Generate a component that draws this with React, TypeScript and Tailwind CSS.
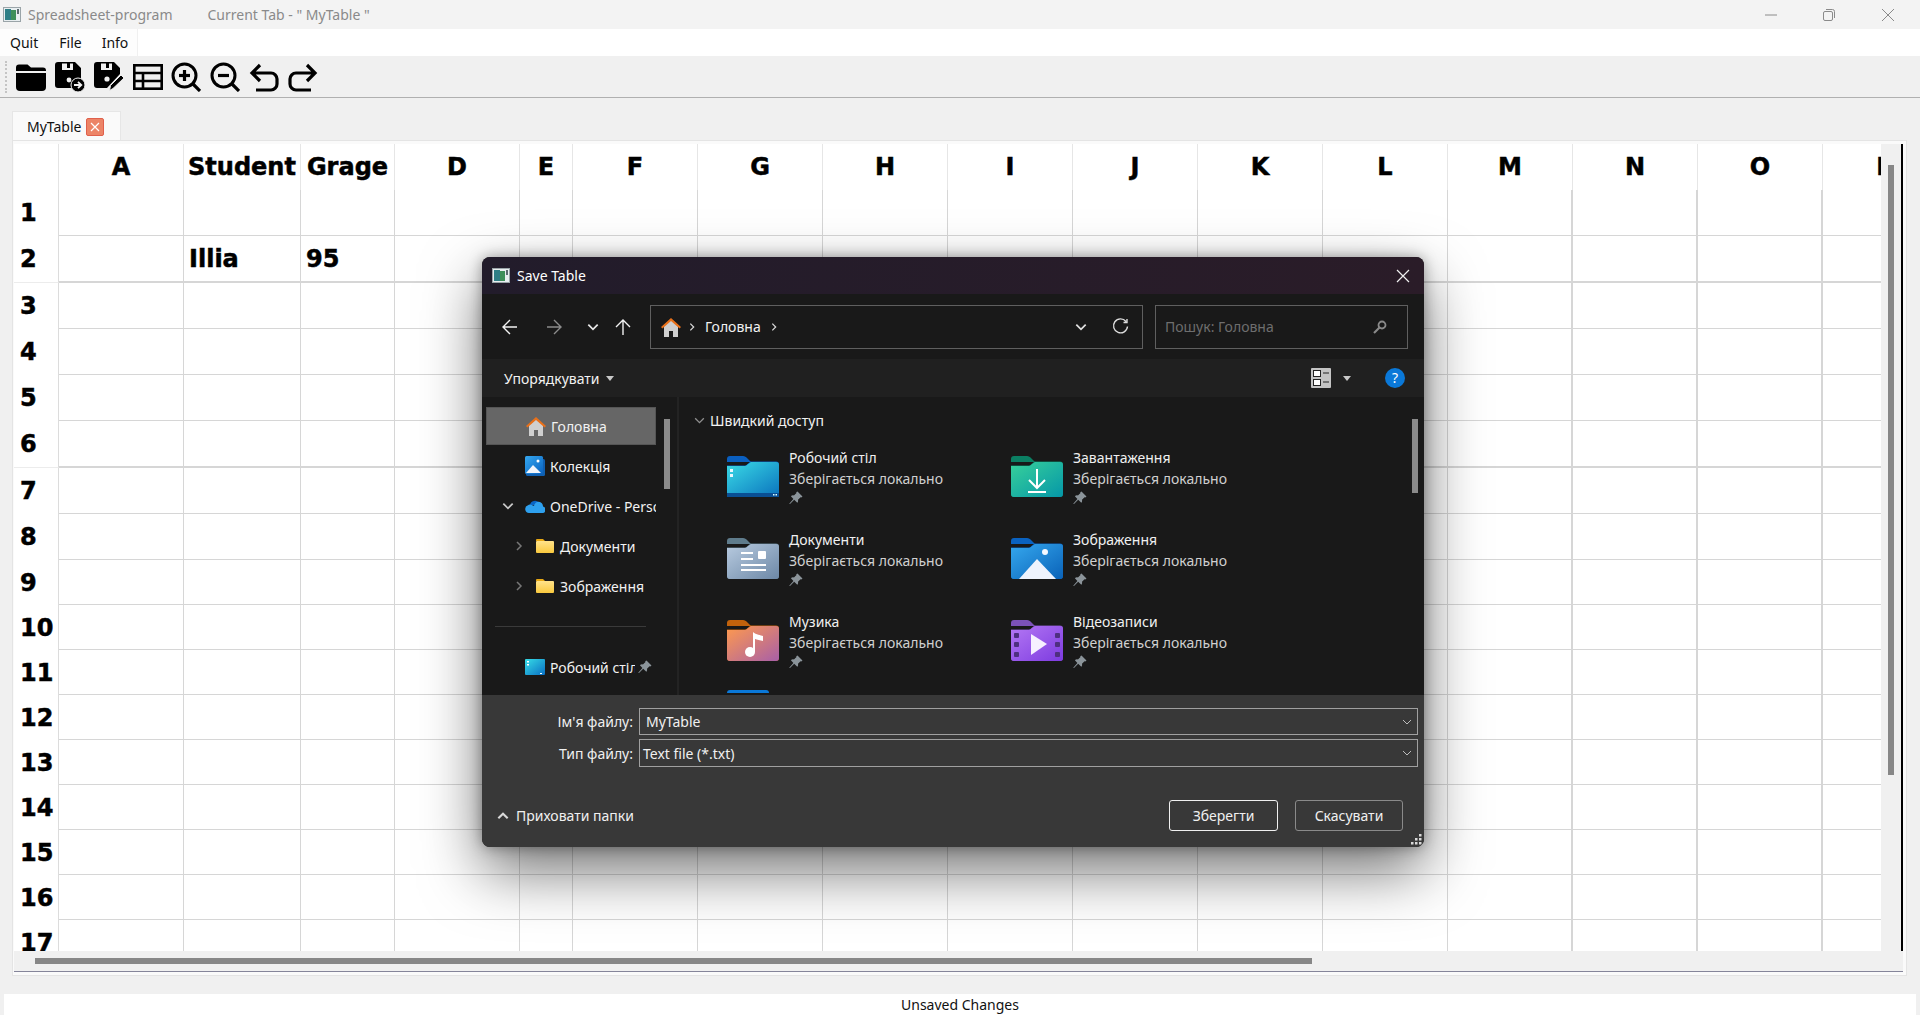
import React from "react";

const UI = "font-['Noto_Sans',sans-serif]";

const cols = [
  { label: "A", w: "w-[125px]", line: "border-r" },
  { label: "Student", w: "w-[117px]", line: "border-r" },
  { label: "Grage", w: "w-[94px]", line: "border-r" },
  { label: "D", w: "w-[125px]", line: "border-r" },
  { label: "E", w: "w-[53px]", line: "border-r" },
  { label: "F", w: "w-[125px]", line: "border-r" },
  { label: "G", w: "w-[125px]", line: "border-r" },
  { label: "H", w: "w-[125px]", line: "border-r" },
  { label: "I", w: "w-[125px]", line: "border-r" },
  { label: "J", w: "w-[125px]", line: "border-r" },
  { label: "K", w: "w-[125px]", line: "border-r" },
  { label: "L", w: "w-[125px]", line: "border-r" },
  { label: "M", w: "w-[125px]", line: "border-r-2" },
  { label: "N", w: "w-[125px]", line: "border-r-2" },
  { label: "O", w: "w-[125px]", line: "border-r-2" },
  { label: "P", w: "w-[125px]", line: "border-r-2" },
];

const rows = [
  { n: 1, h: "h-[46px]", b: "border-b" },
  { n: 2, h: "h-[47px]", b: "border-b-2", cells: { 1: "Illia", 2: "95" }, strong: true },
  { n: 3, h: "h-[46px]", b: "border-b" },
  { n: 4, h: "h-[46px]", b: "border-b" },
  { n: 5, h: "h-[46px]", b: "border-b" },
  { n: 6, h: "h-[47px]", b: "border-b-2", strong: true },
  { n: 7, h: "h-[46px]", b: "border-b" },
  { n: 8, h: "h-[46px]", b: "border-b" },
  { n: 9, h: "h-[45px]", b: "border-b" },
  { n: 10, h: "h-[45px]", b: "border-b" },
  { n: 11, h: "h-[45px]", b: "border-b" },
  { n: 12, h: "h-[45px]", b: "border-b" },
  { n: 13, h: "h-[45px]", b: "border-b" },
  { n: 14, h: "h-[45px]", b: "border-b" },
  { n: 15, h: "h-[45px]", b: "border-b" },
  { n: 16, h: "h-[45px]", b: "border-b" },
  { n: 17, h: "h-[45px]", b: "border-b" },
] as { n: number; h: string; b: string; cells?: Record<number, string>; strong?: boolean }[];

const heavy =
  "font-['DejaVu_Sans',sans-serif] font-bold text-[24px] leading-none text-black [-webkit-text-stroke:0.5px_black]";

function AppIcon() {
  return (
    <svg width="18" height="15" viewBox="0 0 18 15" className="shrink-0">
      <rect x="0.5" y="0.5" width="17" height="14" fill="#e8eef0" stroke="#9aa4a8" />
      <rect x="2" y="2" width="6" height="11" fill="#2f7f86" />
      <rect x="8" y="3" width="5" height="10" fill="#3e8f5a" />
      <rect x="14" y="2" width="2" height="5" fill="#5c6a70" />
    </svg>
  );
}

const T = { width: 30, height: 30, viewBox: "0 0 30 30", className: "shrink-0" };

function FolderOpenTool() {
  return (
    <svg {...T}>
      <path d="M0 5.5a3 3 0 0 1 3-3h8.5l3.5 3h12a3 3 0 0 1 3 3V9H0z" fill="#000" />
      <path d="M0 11h30v14a4 4 0 0 1-4 4H4a4 4 0 0 1-4-4z" fill="#000" />
    </svg>
  );
}
function SaveAsTool() {
  return (
    <svg {...T}>
      <path fillRule="evenodd" d="M0 3a3 3 0 0 1 3-3h17l6 6v11h-9v9H3a3 3 0 0 1-3-3zM7 1.5v6.5h11V1.5h-3V6h-3V1.5z" fill="#000" />
      <circle cx="14" cy="18" r="3.2" fill="none" stroke="#000" strokeWidth="2.2" />
      <circle cx="14" cy="18" r="5.6" fill="#000" />
      <circle cx="14" cy="18" r="2.4" fill="#f0f0f0" />
      <circle cx="23" cy="23" r="7" fill="#000" stroke="#f0f0f0" strokeWidth="1" />
      <path d="M19 23h7M23 19.8l3.3 3.2-3.3 3.2" fill="none" stroke="#f0f0f0" strokeWidth="1.8" />
    </svg>
  );
}
function SaveEditTool() {
  return (
    <svg {...T}>
      <path fillRule="evenodd" d="M0 3a3 3 0 0 1 3-3h17l6 6v6l-13 14H3a3 3 0 0 1-3-3zM7 1.5v6.5h11V1.5h-3V6h-3V1.5z" fill="#000" />
      <circle cx="13" cy="17" r="2.6" fill="#f0f0f0" />
      <path d="M15.5 28.5l1-5L27 13l3 3-11 10.5z" fill="#000" stroke="#f0f0f0" strokeWidth="1" />
    </svg>
  );
}
function TableTool() {
  return (
    <svg {...T} fill="none" stroke="#000" strokeWidth="2.6">
      <rect x="1.3" y="3.3" width="27.4" height="23.4" />
      <path d="M1 11h28M1 19h28M10 11v16" />
    </svg>
  );
}
function ZoomTool({ plus }: { plus?: boolean }) {
  return (
    <svg {...T} fill="none" stroke="#000" strokeWidth="3">
      <circle cx="13.5" cy="13.5" r="11.5" />
      <path d="M22 22l7 7" strokeWidth="3.2" />
      <path d="M8 13.5h11" strokeWidth="3.2" />
      {plus && <path d="M13.5 8v11" strokeWidth="3.2" />}
    </svg>
  );
}
function UndoTool({ flip }: { flip?: boolean }) {
  return (
    <svg {...T} fill="none" stroke="#000" strokeWidth="3.2" className={flip ? "shrink-0 -scale-x-100" : "shrink-0"}>
      <path d="M11 3L3 11l8 8M3 11h19a6 6 0 0 1 6 6v5a6 6 0 0 1-6 6H7" />
    </svg>
  );
}

function HomeIcon() {
  return (
    <svg width="20" height="20" viewBox="0 0 20 20" className="shrink-0">
      <path d="M3 9l7-6 7 6v11h-5v-6H8v6H3z" fill="#cfcfcf" />
      <path d="M0 10l10-9 10 9-1.4 1.4L10 4 1.4 11.4z" fill="#e8701a" />
    </svg>
  );
}
function CollectionIcon() {
  return (
    <svg width="20" height="20" viewBox="0 0 20 20" className="shrink-0">
      <defs>
        <linearGradient id="cg" x1="0" y1="0" x2="1" y2="1">
          <stop offset="0" stopColor="#35a8f0" />
          <stop offset="1" stopColor="#0a62c0" />
        </linearGradient>
      </defs>
      <rect x="1" y="3" width="19" height="17" rx="1.5" fill="#0f5fb0" />
      <rect x="0" y="0" width="18" height="18" rx="1.5" fill="url(#cg)" />
      <path d="M1 17l7-8 8 8z" fill="#f2f5fb" />
      <circle cx="13" cy="5" r="1.5" fill="#fff" />
    </svg>
  );
}
function CloudIcon() {
  return (
    <svg width="20" height="14" viewBox="0 0 20 14" className="shrink-0">
      <path d="M5 6a5 5 0 0 1 9-2 4 4 0 0 1 2 3z" fill="#0a64c4" />
      <path d="M4 14a4 4 0 0 1-1-7.8C5 4 8 7 9 7a4 4 0 0 1 9 .5A3.3 3.3 0 0 1 17 14z" fill="#2ea0ee" />
    </svg>
  );
}
function SmallFolder() {
  return (
    <svg width="18" height="14" viewBox="0 0 18 14" className="shrink-0">
      <defs>
        <linearGradient id="sf" x1="0" y1="0" x2="0" y2="1">
          <stop offset="0" stopColor="#ffe38a" />
          <stop offset="1" stopColor="#f9c93e" />
        </linearGradient>
      </defs>
      <path d="M0 1a1 1 0 0 1 1-1h6l2 2H0z" fill="#e8a814" />
      <rect x="0" y="2" width="18" height="12" rx="1" fill="url(#sf)" />
    </svg>
  );
}
function DesktopSmall() {
  return (
    <svg width="20" height="16" viewBox="0 0 20 16" className="shrink-0">
      <defs>
        <linearGradient id="ds" x1="0" y1="0" x2="1" y2="1">
          <stop offset="0" stopColor="#36dce6" />
          <stop offset="1" stopColor="#0a70c4" />
        </linearGradient>
      </defs>
      <rect width="20" height="16" rx="1" fill="url(#ds)" />
      <rect x="2" y="2" width="2" height="1.5" fill="#fff" />
      <rect x="2" y="5" width="2" height="1.5" fill="#fff" />
      <rect x="15" y="14" width="2" height="1" fill="#fff" />
    </svg>
  );
}
function Pin({ className = "" }: { className?: string }) {
  return (
    <svg width="14" height="14" viewBox="0 0 14 14" className={`shrink-0 ${className}`}>
      <path d="M8.5 0.5l5 5-1.2 1-0.8-.3-2.5 2.6c.3 1.2 0 2.3-.7 3L5.2 8.8 1 13l-.8-.3L4.400 8 1.900 5.200c.8-.8 1.900-1 3-.7l2.600-2.500-.3-.8z" fill="#8b949a" />
    </svg>
  );
}
function Chevron({ dir = "down", size = 12, color = "#d8d8d8", width = 1.5 }: { dir?: "down" | "up" | "right"; size?: number; color?: string; width?: number }) {
  const d = dir === "down" ? "M2 4l4 4 4-4" : dir === "up" ? "M2 8l4-4 4 4" : "M4 2l4 4-4 4";
  return (
    <svg width={size} height={size} viewBox="0 0 12 12" fill="none" stroke={color} strokeWidth={width} className="shrink-0">
      <path d={d} />
    </svg>
  );
}
function Caret() {
  return (
    <svg width="8" height="5" viewBox="0 0 8 5" className="shrink-0">
      <path d="M0 0h8L4 5z" fill="#c8c8c8" />
    </svg>
  );
}

function BigFolder({ id, tab, from, to, children }: { id: string; tab: string; from: string; to: string; children?: React.ReactNode }) {
  return (
    <svg width="52" height="41" viewBox="0 0 52 41" className="shrink-0">
      <defs>
        <linearGradient id={id} x1="0" y1="0" x2="1" y2="1">
          <stop offset="0" stopColor={from} />
          <stop offset="1" stopColor={to} />
        </linearGradient>
      </defs>
      <path d="M0 3a3 3 0 0 1 3-3h13c2 0 3 1 4 2l4 4H0z" fill={tab} />
      <path d="M0 9.500h17c1.500 0 2.500-.5 3.500-1.500l3-2.500H49a3 3 0 0 1 3 3V38a3 3 0 0 1-3 3H3a3 3 0 0 1-3-3z" fill={tab} />
      <path d="M0 10h17c1.500 0 2.500-.5 3.500-1.500L24 6h25a3 3 0 0 1 3 3v29a3 3 0 0 1-3 3H3a3 3 0 0 1-3-3z" fill={`url(#${id})`} />
      {children}
    </svg>
  );
}

const tiles = [
  {
    name: "Робочий стіл",
    icon: (
      <BigFolder id="f1" tab="#0a5fc0" from="#3adbe6" to="#0a72bd">
        <rect x="3" y="13" width="3" height="3" fill="#e8f8ff" />
        <rect x="3" y="18" width="3" height="3" fill="#e8f8ff" />
        <rect x="0" y="37" width="52" height="4" fill="#0a4f94" />
        <rect x="46" y="38" width="1.500" height="1.500" fill="#dff" />
        <rect x="48.500" y="38" width="1.500" height="1.500" fill="#dff" />
      </BigFolder>
    ),
  },
  {
    name: "Завантаження",
    icon: (
      <BigFolder id="f2" tab="#0b7f63" from="#38d19a" to="#0597a8">
        <path d="M26 13v18M18 24l8 8 8-8" fill="none" stroke="#fff" strokeWidth="2" />
        <rect x="17" y="35" width="18" height="2" fill="#fff" />
      </BigFolder>
    ),
  },
  {
    name: "Документи",
    icon: (
      <BigFolder id="f3" tab="#5f7c8c" from="#b8cbe0" to="#6d88a6">
        <rect x="14" y="14" width="12" height="2" fill="#fff" />
        <rect x="14" y="20" width="12" height="2" fill="#fff" />
        <rect x="31" y="13" width="8" height="8" rx="1" fill="#fff" />
        <rect x="14" y="26" width="25" height="2" fill="#fff" />
        <rect x="14" y="31" width="25" height="2" fill="#fff" />
      </BigFolder>
    ),
  },
  {
    name: "Зображення",
    icon: (
      <BigFolder id="f4" tab="#0a62c0" from="#35a8ee" to="#0a62b8">
        <circle cx="34" cy="14" r="3" fill="#f4f8ff" />
        <path d="M8 41l18-20 19 20z" fill="#eef3fd" />
      </BigFolder>
    ),
  },
  {
    name: "Музика",
    icon: (
      <BigFolder id="f5" tab="#c2620c" from="#ff9a4d" to="#a85fa8">
        <circle cx="23" cy="32" r="5" fill="#fff" />
        <path d="M26 32V12c3 3 8 3 10 4v5c-3-1-6-1-8-2v13z" fill="#fff" />
      </BigFolder>
    ),
  },
  {
    name: "Відеозаписи",
    icon: (
      <BigFolder id="f6" tab="#7c52b8" from="#b478f4" to="#7d3be0">
        <path d="M20 14l16 10-16 11z" fill="#f6f0ff" />
        {[13, 22, 32].map((y) => (
          <React.Fragment key={y}>
            <rect x="3" y={y} width="5" height="5" rx="1" fill="#4e2f80" />
            <rect x="44" y={y} width="5" height="5" rx="1" fill="#4e2f80" />
          </React.Fragment>
        ))}
      </BigFolder>
    ),
  },
];

function SideRow({ pl, children, active }: { pl: string; children: React.ReactNode; active?: boolean }) {
  return (
    <div className={`flex h-[38px] w-[170px] shrink-0 items-center overflow-hidden whitespace-nowrap text-[14px] text-[#f2f2f2] ${pl} ${active ? "border border-[#555] bg-[#666666]" : ""}`}>
      {children}
    </div>
  );
}

function Dialog() {
  return (
    <div className={`${UI} absolute left-[482px] top-[257px] flex h-[590px] w-[942px] flex-col overflow-hidden rounded-lg bg-[#191919] shadow-[0_24px_60px_rgba(0,0,0,0.55),0_0_14px_rgba(0,0,0,0.35)]`}>
      <div className="flex h-[37px] shrink-0 items-center bg-gradient-to-r from-[#221c2b] to-[#2a1c28] pl-[10px] pr-[14px]">
        <AppIcon />
        <span className="ml-[7px] text-[14px] text-white">Save Table</span>
        <svg width="14" height="14" viewBox="0 0 14 14" className="ml-auto" stroke="#f0f0f0" strokeWidth="1.2">
          <path d="M1 1l12 12M13 1L1 13" />
        </svg>
      </div>

      <div className="flex h-[65px] shrink-0 items-center bg-[#191919] pl-[20px]">
        <svg width="16" height="16" viewBox="0 0 16 16" fill="none" stroke="#f2f2f2" strokeWidth="1.400">
          <path d="M15 8H1M8 1L1 8l7 7" />
        </svg>
        <svg width="16" height="16" viewBox="0 0 16 16" fill="none" stroke="#8c8c8c" strokeWidth="1.400" className="ml-[28px]">
          <path d="M1 8h14M8 1l7 7-7 7" />
        </svg>
        <div className="ml-[24px]"><Chevron size={14} color="#e8e8e8" /></div>
        <svg width="16" height="16" viewBox="0 0 16 16" fill="none" stroke="#f2f2f2" strokeWidth="1.400" className="ml-[15px]">
          <path d="M8 16V1M1 8l7-7 7 7" />
        </svg>
        <div className="ml-[19px] flex h-[44px] w-[493px] items-center border border-[#5f5f5f] pl-[10px] pr-[13px] text-[14px] text-[#f2f2f2]">
          <HomeIcon />
          <div className="ml-[6px]"><Chevron dir="right" size={10} /></div>
          <span className="ml-[8px]">Головна</span>
          <div className="ml-[8px]"><Chevron dir="right" size={10} /></div>
          <div className="ml-auto"><Chevron size={14} color="#e0e0e0" /></div>
          <svg width="17" height="17" viewBox="0 0 17 17" fill="none" stroke="#dcdcdc" strokeWidth="1.400" className="ml-[24px]">
            <path d="M14 3.500A7 7 0 1 0 15.500 8.500M15 1v3.500h-3.500" />
          </svg>
        </div>
        <div className="ml-[12px] flex h-[44px] w-[253px] items-center border border-[#5f5f5f] pl-[9px] pr-[20px] text-[14px] text-[#6e6e6e]">
          <span>Пошук: Головна</span>
          <svg width="14" height="14" viewBox="0 0 14 14" fill="none" stroke="#8a8a8a" strokeWidth="1.800" className="ml-auto">
            <circle cx="9" cy="5" r="3.500" />
            <path d="M6.500 7.500L1 13" strokeWidth="2.200" />
          </svg>
        </div>
      </div>

      <div className="flex h-[38px] shrink-0 items-center bg-[#202020] pl-[22px] pr-[19px] text-[14px] text-[#f2f2f2]">
        <span>Упорядкувати</span>
        <div className="ml-[6px]"><Caret /></div>
        <svg width="20" height="20" viewBox="0 0 20 20" className="ml-auto">
          <rect width="20" height="20" rx="1" fill="#c4c4c4" />
          <rect x="2.500" y="2.500" width="7" height="6" fill="#fff" stroke="#222" />
          <rect x="2.500" y="11.500" width="7" height="6" fill="#fff" stroke="#222" />
          <path d="M12 5h6M12 14h6" stroke="#222" />
        </svg>
        <div className="ml-[12px]"><Caret /></div>
        <div className="ml-[34px] flex h-[20px] w-[20px] items-center justify-center rounded-full bg-[#0a78d8] text-[14px] leading-none text-white">?</div>
      </div>

      <div className="flex min-h-0 flex-1 overflow-hidden">
        <div className="flex w-[197px] shrink-0 border-r-2 border-[#232323] pl-[4px]">
          <div className="flex w-[170px] flex-col gap-[2px] pt-[10px]">
            <SideRow pl="pl-[39px]" active>
              <HomeIcon />
              <span className="ml-[5px]">Головна</span>
            </SideRow>
            <SideRow pl="pl-[39px]">
              <CollectionIcon />
              <span className="ml-[5px]">Колекція</span>
            </SideRow>
            <SideRow pl="pl-[15px]">
              <Chevron size={14} color="#c8c8c8" />
              <div className="ml-[10px]"><CloudIcon /></div>
              <span className="ml-[5px]">OneDrive - Personal</span>
            </SideRow>
            <SideRow pl="pl-[27px]">
              <Chevron dir="right" size={12} color="#777" />
              <div className="ml-[11px]"><SmallFolder /></div>
              <span className="ml-[6px]">Документи</span>
            </SideRow>
            <SideRow pl="pl-[27px]">
              <Chevron dir="right" size={12} color="#777" />
              <div className="ml-[11px]"><SmallFolder /></div>
              <span className="ml-[6px]">Зображення</span>
            </SideRow>
            <div className="ml-[9px] mt-[19px] mb-[19px] h-px w-[151px] shrink-0 bg-[#3a3a3a]" />
            <SideRow pl="pl-[39px]">
              <DesktopSmall />
              <span className="ml-[5px] w-[85px] overflow-hidden">Робочий стіл</span>
              <Pin className="ml-[3px]" />
            </SideRow>
          </div>
          <div className="ml-[8px] mt-[22px] h-[70px] w-[6px] bg-[#8a8a8a]" />
        </div>

        <div className="flex min-w-0 flex-1">
          <div className="min-w-0 flex-1 pl-[14px]">
            <div className="flex h-[46px] items-center text-[14px] text-[#f2f2f2]">
              <Chevron size={13} color="#8e8e8e" width={1.200} />
              <span className="ml-[4px]">Швидкий доступ</span>
            </div>
            <div className="ml-[34px] grid w-[570px] grid-cols-[284px_284px]">
              {tiles.map((t) => (
                <div key={t.name} className="flex h-[82px] gap-[10px] pt-[4px]">
                  <div className="pt-[9px]">{t.icon}</div>
                  <div className="text-[14px] leading-[21px] text-[#f0f0f0]">
                    <div>{t.name}</div>
                    <div className="text-[#d0d0d0]">Зберігається локально</div>
                    <Pin className="mt-[2px]" />
                  </div>
                </div>
              ))}
              <div className="h-[3px] w-[42px] rounded-t-sm bg-[#0a78d8] mt-[1px]" />
            </div>
          </div>
          <div className="mr-[6px] mt-[22px] h-[74px] w-[6px] bg-[#8a8a8a]" />
        </div>
      </div>

      <div className="flex h-[152px] shrink-0 flex-col bg-[#383838] pr-[6px] text-[14px] text-[#f0f0f0]">
        <div className="mt-[13px] flex items-center">
          <span className="w-[151px] text-right">Ім'я файлу:</span>
          <div className="ml-[6px] flex h-[27px] flex-1 items-center justify-between border border-[#a0a0a0] pl-[6px] pr-[4px]">
            <span>MyTable</span>
            <Chevron size={12} color="#bdbdbd" width={1} />
          </div>
        </div>
        <div className="mt-[4px] flex items-center">
          <span className="w-[151px] text-right">Тип файлу:</span>
          <div className="ml-[6px] flex h-[28px] flex-1 items-center justify-between border border-[#a0a0a0] pl-[3px] pr-[4px]">
            <span>Text file (*.txt)</span>
            <Chevron size={12} color="#bdbdbd" width={1} />
          </div>
        </div>
        <div className="mt-auto mb-[16px] flex items-center pl-[14px] pr-[15px]">
          <Chevron dir="up" size={14} color="#d8d8d8" width={1.800} />
          <span className="ml-[6px]">Приховати папки</span>
          <div className="ml-auto flex h-[31px] w-[109px] items-center justify-center rounded-[3px] border border-[#f0f0f0]">Зберегти</div>
          <div className="ml-[17px] flex h-[31px] w-[108px] items-center justify-center rounded-[3px] border border-[#8a8a8a]">Скасувати</div>
        </div>
      </div>
      <svg width="11" height="11" viewBox="0 0 11 11" fill="#d8d8d8" className="absolute bottom-[2px] right-[2px]">
        <rect x="8" y="0" width="2.500" height="2.500" />
        <rect x="4" y="4" width="2.500" height="2.500" />
        <rect x="8" y="4" width="2.500" height="2.500" />
        <rect x="0" y="8" width="2.500" height="2.500" />
        <rect x="4" y="8" width="2.500" height="2.500" />
        <rect x="8" y="8" width="2.500" height="2.500" />
      </svg>
    </div>
  );
}

export default function App() {
  return (
    <div className={`${UI} relative flex h-[1015px] w-[1920px] flex-col overflow-hidden bg-[#f0f0f0]`}>
      {/* window title */}
      <div className="flex h-[29px] shrink-0 items-center bg-[#f3f3f3] pl-[3px] text-[14px] text-[#8a8a8a]">
        <AppIcon />
        <span className="ml-[7px]">Spreadsheet-program</span>
        <span className="ml-[35px]">Current Tab - " MyTable "</span>
        <div className="ml-auto flex items-center pr-[26px]">
          <svg width="12" height="12" viewBox="0 0 12 12" stroke="#8a8a8a"><path d="M0 6h12" /></svg>
          <svg width="12" height="12" viewBox="0 0 12 12" fill="none" stroke="#8a8a8a" className="ml-[46px]">
            <rect x="0.500" y="2.500" width="9" height="9" rx="1.500" />
            <path d="M3 .5h6.500a2 2 0 0 1 2 2V9" />
          </svg>
          <svg width="12" height="12" viewBox="0 0 12 12" stroke="#8a8a8a" className="ml-[47px]"><path d="M0 0l12 12M12 0L0 12" /></svg>
        </div>
      </div>

      {/* menu */}
      <div className="flex h-[27px] shrink-0 items-center bg-white text-[14px] text-[#111]">
        <div className="flex h-full w-[138px] items-center border-r border-[#f0f0f0] bg-[#fdfdfd]">
          <span className="ml-[10px]">Quit</span>
          <span className="ml-[21px]">File</span>
          <span className="ml-[20px]">Info</span>
        </div>
      </div>

      {/* toolbar */}
      <div className="flex h-[42px] shrink-0 items-center border-b border-[#b0b0b0] bg-[#f0f0f0] pl-[5px]">
        <div className="h-[32px] w-[2px] border-l-2 border-dotted border-[#c4c4c4]" />
        <div className="ml-[9px] flex items-center gap-[9px]">
          <FolderOpenTool />
          <SaveAsTool />
          <SaveEditTool />
          <TableTool />
          <div className="-ml-px"><ZoomTool plus /></div>
          <ZoomTool />
          <UndoTool />
          <UndoTool flip />
        </div>
      </div>

      {/* tabs */}
      <div className="flex h-[42px] shrink-0 items-end pl-[12px]">
        <div className="-mb-px flex h-[30px] w-[109px] items-center border border-b-0 border-[#e6e6e6] bg-[#fafafa] pl-[14px] text-[14px] text-[#111]">
          <span>MyTable</span>
          <span className="ml-[5px] flex h-[18px] w-[18px] items-center justify-center rounded-[2px] border border-[#e0604c] bg-[#ec8467]">
            <svg width="10" height="10" viewBox="0 0 10 10" stroke="#fff" strokeWidth="1.200"><path d="M1 1l8 8M9 1L1 9" /></svg>
          </span>
        </div>
      </div>

      {/* sheet pane */}
      <div className="ml-[12px] mr-[13px] flex h-[836px] shrink-0 flex-col border border-[#e4e4e4] bg-[#fafafa] pl-px pr-[3px] pt-[3px]">
        <div className="flex h-[807px] shrink-0 border-r-2 border-black">
          <div className="min-w-0 flex-1 overflow-hidden bg-white">
            <div className="flex h-[46px] w-max">
              <div className="w-[45px] shrink-0 border-r border-[#e4e4e4]" />
              {cols.map((c) => (
                <div key={c.label} className={`flex shrink-0 items-center justify-center border-r border-[#e6e6e6] pb-px ${c.w} ${heavy}`}>
                  {c.label}
                </div>
              ))}
            </div>
            {rows.map((r) => (
              <div key={r.n} className={`flex w-max ${r.h}`}>
                <div className={`flex w-[45px] shrink-0 items-center border-r border-[#dcdcdc] pl-[6px] ${r.strong ? "border-b border-b-[#ececec]" : ""} ${heavy}`}>
                  {r.n}
                </div>
                {cols.map((c, i) => (
                  <div key={c.label} className={`flex shrink-0 items-center border-[#d6d6d6] pl-[5px] ${c.w} ${c.line} ${r.b} ${heavy}`}>
                    {r.cells?.[i]}
                  </div>
                ))}
              </div>
            ))}
          </div>
          <div className="w-[20px] shrink-0 bg-[#f0f0f0] pl-[7px] pt-[21px]">
            <div className="h-[610px] w-[6px] bg-[#878787]" />
          </div>
        </div>
        <div className="flex h-[20px] shrink-0 items-center bg-[#f0f0f0] pl-[21px]">
          <div className="h-[6px] w-[1277px] bg-[#878787]" />
        </div>
        <div className="h-px shrink-0 bg-[#85859a]" />
      </div>

      {/* status */}
      <div className="mx-[4px] mt-[18px] flex h-[22px] items-center justify-center bg-white text-[14px] text-[#111]">
        Unsaved Changes
      </div>

      <Dialog />
    </div>
  );
}
